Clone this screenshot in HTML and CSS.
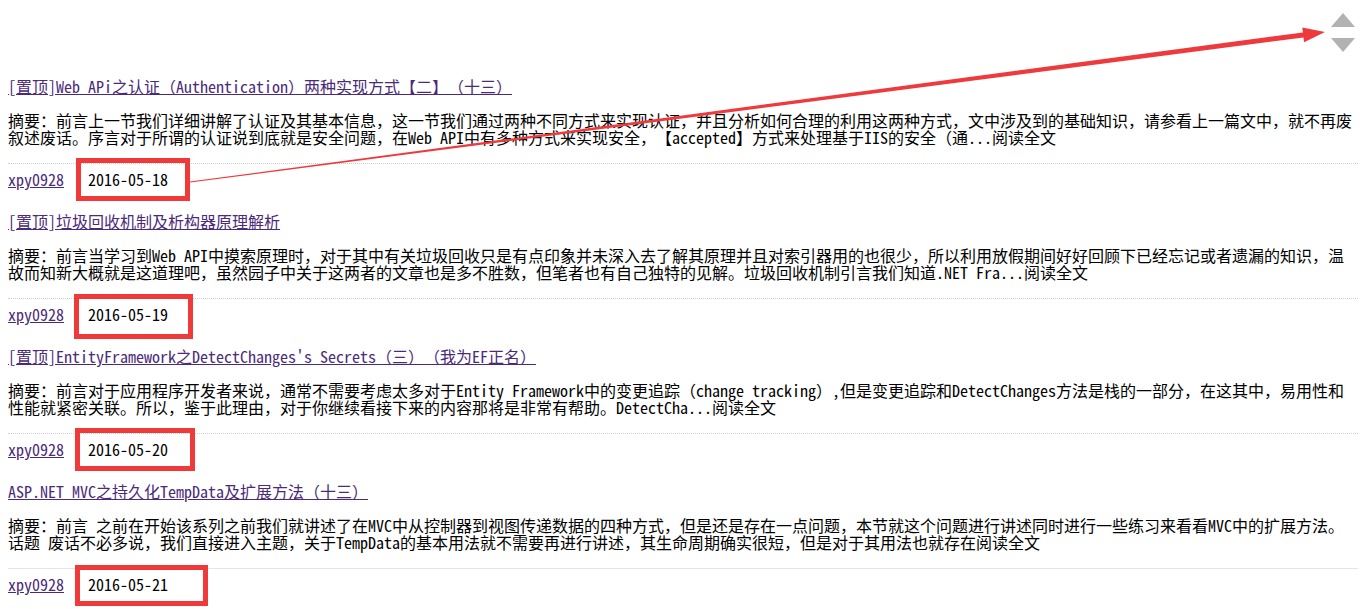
FILE: index.html
```html
<!DOCTYPE html>
<html lang="zh-CN">
<head>
  <meta charset="UTF-8">
  <meta name="viewport" content="width=device-width, initial-scale=1.0">
  <title>xpy0928 - 博客园</title>
  <link rel="stylesheet" href="styles.css">
</head>
<body>

<div class="top-space"></div>

<div id="posts">
  <div class="post">
    <div class="post-title"><a href="#">[置顶]Web APi之认证（Authentication）两种实现方式【二】（十三）</a></div>
    <div class="post-summary">摘要：前言上一节我们详细讲解了认证及其基本信息，这一节我们通过两种不同方式来实现认证，并且分析如何合理的利用这两种方式，文中涉及到的基础知识，请参看上一篇文中，就不再废叙述废话。序言对于所谓的认证说到底就是安全问题，在Web API中有多种方式来实现安全，【accepted】方式来处理基于IIS的安全（通...阅读全文</div>
    <div class="post-footer"><a href="#">xpy0928</a><span class="post-date mark-1">2016-05-18</span></div>
  </div>

  <div class="post">
    <div class="post-title"><a href="#">[置顶]垃圾回收机制及析构器原理解析</a></div>
    <div class="post-summary">摘要：前言当学习到Web API中摸索原理时，对于其中有关垃圾回收只是有点印象并未深入去了解其原理并且对索引器用的也很少，所以利用放假期间好好回顾下已经忘记或者遗漏的知识，温故而知新大概就是这道理吧，虽然园子中关于这两者的文章也是多不胜数，但笔者也有自己独特的见解。垃圾回收机制引言我们知道.NET Fra...阅读全文</div>
    <div class="post-footer"><a href="#">xpy0928</a><span class="post-date mark-2">2016-05-19</span></div>
  </div>

  <div class="post">
    <div class="post-title"><a href="#">[置顶]EntityFramework之DetectChanges's Secrets（三）（我为EF正名）</a></div>
    <div class="post-summary">摘要：前言对于应用程序开发者来说，通常不需要考虑太多对于Entity Framework中的变更追踪（change tracking）,但是变更追踪和DetectChanges方法是栈的一部分，在这其中，易用性和性能就紧密关联。所以，鉴于此理由，对于你继续看接下来的内容那将是非常有帮助。DetectCha...阅读全文</div>
    <div class="post-footer"><a href="#">xpy0928</a><span class="post-date mark-3">2016-05-20</span></div>
  </div>

  <div class="post">
    <div class="post-title"><a href="#">ASP.NET MVC之持久化TempData及扩展方法（十三）</a></div>
    <div class="post-summary">摘要：前言 之前在开始该系列之前我们就讲述了在MVC中从控制器到视图传递数据的四种方式，但是还是存在一点问题，本节就这个问题进行讲述同时进行一些练习来看看MVC中的扩展方法。话题 废话不必多说，我们直接进入主题，关于TempData的基本用法就不需要再进行讲述，其生命周期确实很短，但是对于其用法也就存在阅读全文</div>
    <div class="post-footer last"><a href="#">xpy0928</a><span class="post-date mark-4">2016-05-21</span></div>
  </div>
</div>

<!-- back to top / bottom -->
<div class="scroll-nav">
  <span class="scroll-up"></span>
  <span class="scroll-down"></span>
</div>

<!-- red arrow pointing from the first date up to the scroll buttons -->
<svg class="arrow" width="1366" height="609" viewBox="0 0 1366 609">
  <polygon points="189.9,181.5 1302.9,32.4 1302.3,27.5 1325,32 1304.1,42.2 1303.5,37.4 190.1,182.6" fill="#ee3a3d"/>
</svg>

</body>
</html>
```

FILE: styles.css
```css
body {
  font-family: "Noto Sans Mono CJK SC", "Noto Sans CJK SC", "Liberation Mono", monospace;
  font-size: 16px;
  line-height: 17px;
  color: #000;
  background-color: #fff;
  margin: 8px;
  position: relative;
  text-spacing-trim: space-all;
}

a {
  color: #4b2a7a;
  text-decoration: underline;
}

.top-space {
  height: 70px;
}

.post-summary {
  margin-top: 17px;
}

.post-footer {
  margin-top: 17px;
  padding-top: 7px;
  border-top: 1px dotted #cfcfcf;
  margin-bottom: 25px;
}

.post-footer.last {
  border-top: 1px solid #e4e4e4;
}

.post-date {
  position: relative;
  margin-left: 24px;
}

/* red highlight boxes round the dates */
.post-date::after {
  content: "";
  position: absolute;
  border: 5px solid #f03a3a;
  top: -9px;
  bottom: -10px;
  left: -12px;
  right: -22px;
}

.mark-2::after {
  top: -8px;
  bottom: -13px;
  left: -14px;
  right: -25px;
}

.mark-3::after {
  left: -13px;
  right: -27px;
}

.mark-4::after {
  top: -7px;
  bottom: -10px;
  left: -13px;
  right: -40px;
}

.scroll-nav {
  position: absolute;
  top: 5px;
  right: 3px;
  display: flex;
  flex-direction: column;
  gap: 11px;
}

.scroll-up {
  width: 0;
  height: 0;
  border-left: 12px solid transparent;
  border-right: 12px solid transparent;
  border-bottom: 14px solid #b2b2b2;
}

.scroll-down {
  width: 0;
  height: 0;
  border-left: 12px solid transparent;
  border-right: 12px solid transparent;
  border-top: 14px solid #b2b2b2;
}

.arrow {
  position: absolute;
  top: -8px;
  left: -8px;
  pointer-events: none;
}
```
